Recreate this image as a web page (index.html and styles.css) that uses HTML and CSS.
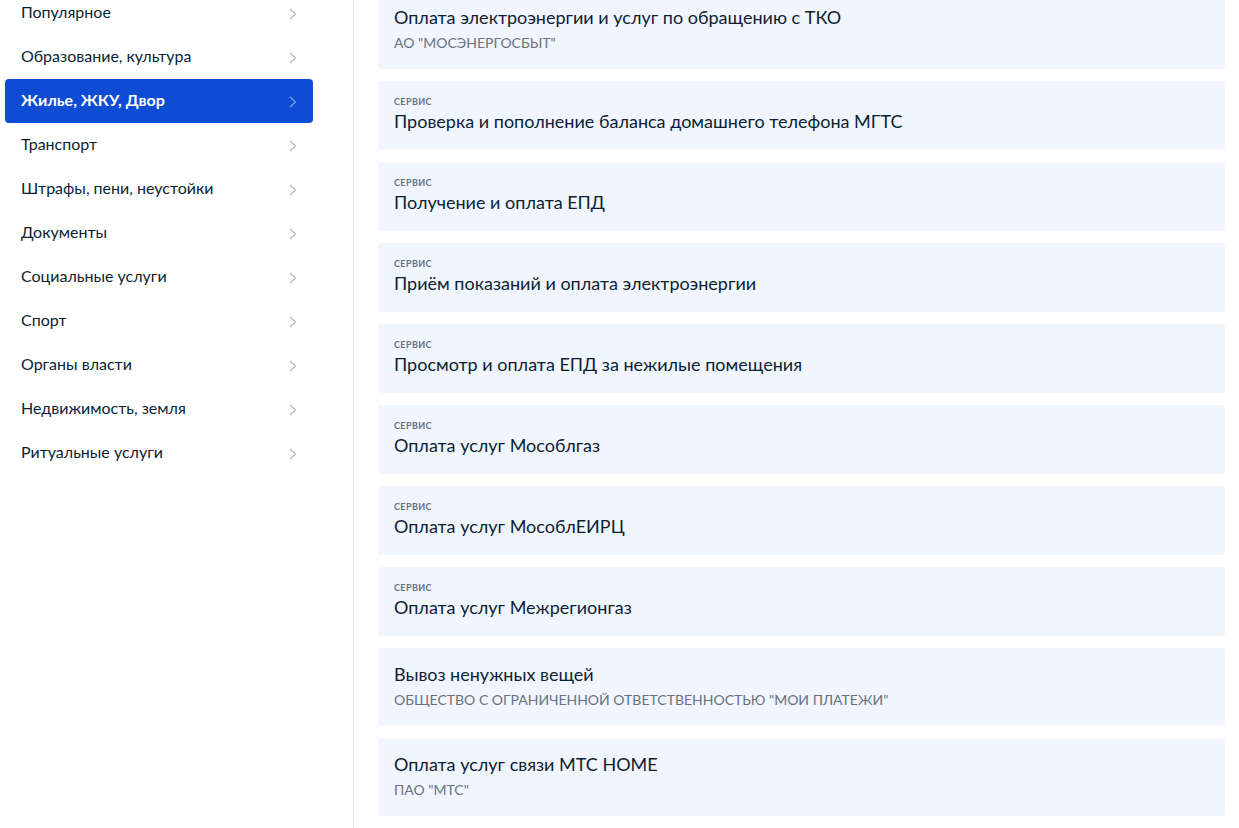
FILE: index.html
```html
<!DOCTYPE html>
<html lang="ru">
<head>
    <meta charset="UTF-8">
    <title>Жилье, ЖКУ, Двор</title>
    <link rel="stylesheet" href="styles.css">
</head>
<body>
    <div class="page">
        <div class="sidebar">
            <a href="#" class="cat">Популярное<svg class="chev" viewBox="0 0 8 12"><path d="M1 1l5.5 5L1 11"/></svg></a>
            <a href="#" class="cat">Образование, культура<svg class="chev" viewBox="0 0 8 12"><path d="M1 1l5.5 5L1 11"/></svg></a>
            <a href="#" class="cat active">Жилье, ЖКУ, Двор<svg class="chev" viewBox="0 0 8 12"><path d="M1 1l5.5 5L1 11"/></svg></a>
            <a href="#" class="cat">Транспорт<svg class="chev" viewBox="0 0 8 12"><path d="M1 1l5.5 5L1 11"/></svg></a>
            <a href="#" class="cat">Штрафы, пени, неустойки<svg class="chev" viewBox="0 0 8 12"><path d="M1 1l5.5 5L1 11"/></svg></a>
            <a href="#" class="cat">Документы<svg class="chev" viewBox="0 0 8 12"><path d="M1 1l5.5 5L1 11"/></svg></a>
            <a href="#" class="cat">Социальные услуги<svg class="chev" viewBox="0 0 8 12"><path d="M1 1l5.5 5L1 11"/></svg></a>
            <a href="#" class="cat">Спорт<svg class="chev" viewBox="0 0 8 12"><path d="M1 1l5.5 5L1 11"/></svg></a>
            <a href="#" class="cat">Органы власти<svg class="chev" viewBox="0 0 8 12"><path d="M1 1l5.5 5L1 11"/></svg></a>
            <a href="#" class="cat">Недвижимость, земля<svg class="chev" viewBox="0 0 8 12"><path d="M1 1l5.5 5L1 11"/></svg></a>
            <a href="#" class="cat">Ритуальные услуги<svg class="chev" viewBox="0 0 8 12"><path d="M1 1l5.5 5L1 11"/></svg></a>
        </div>

        <div class="services">
            <a href="#" class="card">
                <div class="card-title">Оплата электроэнергии и услуг по обращению с ТКО</div>
                <div class="card-org">АО "МОСЭНЕРГОСБЫТ"</div>
            </a>
            <a href="#" class="card">
                <div class="card-type">Сервис</div>
                <div class="card-title">Проверка и пополнение баланса домашнего телефона МГТС</div>
            </a>
            <a href="#" class="card">
                <div class="card-type">Сервис</div>
                <div class="card-title">Получение и оплата ЕПД</div>
            </a>
            <a href="#" class="card">
                <div class="card-type">Сервис</div>
                <div class="card-title">Приём показаний и оплата электроэнергии</div>
            </a>
            <a href="#" class="card">
                <div class="card-type">Сервис</div>
                <div class="card-title">Просмотр и оплата ЕПД за нежилые помещения</div>
            </a>
            <a href="#" class="card">
                <div class="card-type">Сервис</div>
                <div class="card-title">Оплата услуг Мособлгаз</div>
            </a>
            <a href="#" class="card">
                <div class="card-type">Сервис</div>
                <div class="card-title">Оплата услуг МособлЕИРЦ</div>
            </a>
            <a href="#" class="card">
                <div class="card-type">Сервис</div>
                <div class="card-title">Оплата услуг Межрегионгаз</div>
            </a>
            <a href="#" class="card">
                <div class="card-title">Вывоз ненужных вещей</div>
                <div class="card-org">Общество с ограниченной ответственностью "Мои платежи"</div>
            </a>
            <a href="#" class="card">
                <div class="card-title">Оплата услуг связи МТС HOME</div>
                <div class="card-org">ПАО "МТС"</div>
            </a>
        </div>
    </div>
</body>
</html>
```

FILE: styles.css
```css
body {
    font-family: Lato, "Noto Sans", sans-serif;
    margin: 0;
    padding: 0;
    color: #0b1f33;
    background: #fff;
    overflow: hidden;
}
a {
    text-decoration: none;
    color: inherit;
}
.page {
    display: flex;
    margin-top: -9px;
}
.sidebar {
    width: 354px;
    flex-shrink: 0;
    min-height: 860px;
    border-right: 1px solid #e3e6ea;
    padding: 0 40px 0 5px;
    box-sizing: border-box;
    display: flex;
    flex-direction: column;
}
.cat {
    display: flex;
    align-items: center;
    justify-content: space-between;
    height: 44px;
    padding: 0 16px 4px;
    box-sizing: border-box;
    font-size: 16px;
    border-radius: 4px;
}
.chev {
    width: 8px;
    height: 12px;
    margin: 5px 0 0 0;
    fill: none;
    stroke: #a9b0b8;
    stroke-width: 1.1;
}
.cat.active {
    background: #0d4cd3;
    color: #fff;
    font-weight: bold;
}
.cat.active .chev {
    stroke: #8aa8e8;
}
.services {
    flex-grow: 1;
    padding: 0 14px 0 24px;
    display: flex;
    flex-direction: column;
    gap: 12px;
}
.card {
    display: block;
    background: #f1f5fe;
    border-radius: 2px;
    padding: 14px 16px 16px;
}
.card-type {
    font-size: 9px;
    font-weight: bold;
    line-height: 12px;
    text-transform: uppercase;
    letter-spacing: 0.4px;
    color: #66727f;
    margin: 1px 0 1px;
}
.card-type + .card-title {
    margin-bottom: 1px;
}
.card-title {
    font-size: 18px;
    line-height: 24px;
}
.card-org {
    font-size: 14px;
    line-height: 20px;
    margin-top: 4px;
    text-transform: uppercase;
    color: #66727f;
}
```
